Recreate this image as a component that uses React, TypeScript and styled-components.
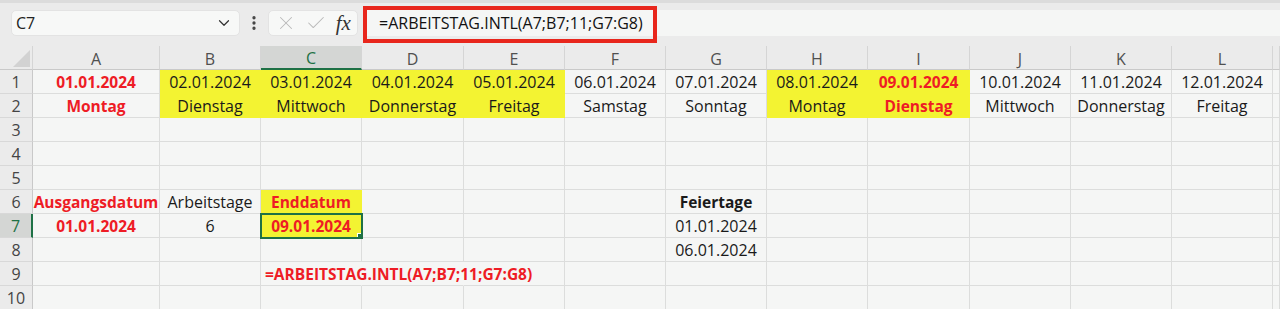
import React from 'react';
import styled, { createGlobalStyle } from 'styled-components';
import { ChevronDown, EllipsisVertical, X, Check } from 'lucide-react';

const GREEN = '#1e7145';
const RED = '#ee1c25';
const YELLOW = '#f3f332';
const GRID = '#dcdddc';

type CellSpec = {
  v: string;
  fill?: boolean;
  red?: boolean;
  bold?: boolean;
  left?: boolean;
  spill?: boolean;
  noRight?: boolean;
};

const columns = ['A', 'B', 'C', 'D', 'E', 'F', 'G', 'H', 'I', 'J', 'K', 'L'];
const widths = [127, 101, 101, 102, 101, 101, 101, 101, 102, 101, 101, 101];

const dates = ['01', '02', '03', '04', '05', '06', '07', '08', '09', '10', '11', '12'];
const days = [
  'Montag', 'Dienstag', 'Mittwoch', 'Donnerstag', 'Freitag', 'Samstag',
  'Sonntag', 'Montag', 'Dienstag', 'Mittwoch', 'Donnerstag', 'Freitag'
];
const yellowCols = ['B', 'C', 'D', 'E', 'H', 'I'];
const redCols = ['A', 'I'];

const cells: Record<string, CellSpec> = {};
columns.forEach((c, i) => {
  const fill = yellowCols.includes(c);
  const red = redCols.includes(c);
  cells[`${c}1`] = { v: `${dates[i]}.01.2024`, fill, red, bold: red };
  cells[`${c}2`] = { v: days[i], fill, red, bold: red };
});
cells.A6 = { v: 'Ausgangsdatum', red: true, bold: true };
cells.B6 = { v: 'Arbeitstage' };
cells.C6 = { v: 'Enddatum', fill: true, red: true, bold: true };
cells.G6 = { v: 'Feiertage', bold: true };
cells.A7 = { v: '01.01.2024', red: true, bold: true };
cells.B7 = { v: '6' };
cells.C7 = { v: '09.01.2024', fill: true, red: true, bold: true };
cells.G7 = { v: '01.01.2024' };
cells.G8 = { v: '06.01.2024' };
cells.C9 = { v: '=ARBEITSTAG.INTL(A7;B7;11;G7:G8)', red: true, bold: true, left: true, spill: true, noRight: true };
cells.D9 = { v: '', noRight: true };

const selected = 'C7';
const rows = [1, 2, 3, 4, 5, 6, 7, 8, 9, 10];

const App = () => {
  return (
    <>
      <GlobalStyle />
      <Toolbar>
        <NameBox>
          <span>C7</span>
          <ChevronDown size={18} strokeWidth={1.6} color="#333" />
        </NameBox>
        <Dots>
          <EllipsisVertical size={18} strokeWidth={2.4} color="#444" />
        </Dots>
        <ButtonGroup>
          <X size={22} strokeWidth={1.1} color="#b9b9b9" />
          <Check size={22} strokeWidth={1.1} color="#b9b9b9" />
          <Fx>fx</Fx>
        </ButtonGroup>
        <FormulaInput>
          =ARBEITSTAG.INTL(A7;B7;11;G7:G8)
          <Highlight />
        </FormulaInput>
      </Toolbar>

      <Sheet $cols={widths}>
        <Corner>
          <svg width="33" height="24" viewBox="0 0 33 24">
            <polygon points="30,4 30,21 13,21" fill="#d2d2d2" />
          </svg>
        </Corner>
        {columns.map((c) => (
          <ColHeader key={c} $active={c === selected[0]}>
            {c}
          </ColHeader>
        ))}
        <ColHeader />

        {rows.map((r) => (
          <React.Fragment key={r}>
            <RowHeader $active={`${r}` === selected.slice(1)}>{r}</RowHeader>
            {columns.map((c) => {
              const id = `${c}${r}`;
              const cell = cells[id];
              return (
                <Cell
                  key={id}
                  $fill={cell?.fill ? YELLOW : undefined}
                  $red={cell?.red}
                  $bold={cell?.bold}
                  $left={cell?.left}
                  $spill={cell?.spill}
                  $noRight={cell?.noRight}
                  $selected={id === selected}
                >
                  {cell?.v}
                </Cell>
              );
            })}
            <Cell />
          </React.Fragment>
        ))}
      </Sheet>
    </>
  );
};

export default App;

const GlobalStyle = createGlobalStyle`
  body {
    margin: 0;
    background: #f5f6f5;
    font-family: 'Open Sans', 'Liberation Sans', sans-serif;
    overflow: hidden;
  }
`;

const Toolbar = styled.div`
  display: flex;
  align-items: flex-start;
  height: 46px;
  box-sizing: border-box;
  padding: 7px 0 0 11px;
  background: #ebebeb;
  border-top: 3px solid #dcdcdc;
`;

const NameBox = styled.div`
  display: flex;
  align-items: center;
  justify-content: space-between;
  width: 229px;
  height: 26px;
  box-sizing: border-box;
  padding: 0 6px 0 4px;
  background: #f7f8f7;
  border: 1px solid #e3e3e3;
  border-radius: 5px;
  font-size: 16px;
  color: #222;
`;

const Dots = styled.div`
  display: flex;
  align-items: center;
  justify-content: center;
  width: 28px;
  height: 26px;
`;

const ButtonGroup = styled.div`
  display: flex;
  align-items: center;
  justify-content: space-around;
  width: 90px;
  height: 26px;
  box-sizing: border-box;
  padding: 0 2px;
  background: #f7f8f7;
  border: 1px solid #e3e3e3;
  border-radius: 5px;
`;

const Fx = styled.span`
  font-family: 'Liberation Serif', 'DejaVu Serif', serif;
  font-style: italic;
  font-size: 21px;
  color: #333;
  line-height: 1;
`;

const FormulaInput = styled.div`
  position: relative;
  flex: 1;
  display: flex;
  align-items: center;
  height: 26px;
  margin-left: 5px;
  padding-left: 16px;
  background: #f5f6f5;
  font-size: 16px;
  color: #111;
  white-space: nowrap;
`;

const Highlight = styled.div`
  position: absolute;
  left: 0;
  top: -4px;
  width: 294px;
  height: 37px;
  box-sizing: border-box;
  border: 4px solid #e8261c;
  pointer-events: none;
`;

const Sheet = styled.div<{ $cols: number[] }>`
  display: grid;
  grid-template-columns: 33px ${(p) => p.$cols.map((w) => `${w}px`).join(' ')} 1fr;
  grid-auto-rows: 24px;
  overflow: hidden;
  font-size: 16px;
`;

const Corner = styled.div`
  background: #ebebeb;
  border-right: 1px solid #d5d5d5;
  border-bottom: 1px solid #c9c9c9;
  box-sizing: border-box;

  svg {
    display: block;
  }
`;

const ColHeader = styled.div<{ $active?: boolean }>`
  display: flex;
  align-items: center;
  justify-content: center;
  box-sizing: border-box;
  padding-top: 2px;
  background: ${(p) => (p.$active ? '#d4d6d4' : '#ebebeb')};
  color: ${(p) => (p.$active ? GREEN : '#505050')};
  border-right: 1px solid #d5d5d5;
  border-bottom: ${(p) => (p.$active ? `2px solid ${GREEN}` : '1px solid #c9c9c9')};
`;

const RowHeader = styled.div<{ $active?: boolean }>`
  display: flex;
  align-items: center;
  justify-content: center;
  box-sizing: border-box;
  background: ${(p) => (p.$active ? '#d4d6d4' : '#ebebeb')};
  color: ${(p) => (p.$active ? GREEN : '#444')};
  border-right: ${(p) => (p.$active ? `2px solid ${GREEN}` : '1px solid #c9c9c9')};
  border-bottom: 1px solid #d8d8d8;
`;

const Cell = styled.div<{
  $fill?: string;
  $red?: boolean;
  $bold?: boolean;
  $left?: boolean;
  $spill?: boolean;
  $noRight?: boolean;
  $selected?: boolean;
}>`
  position: relative;
  display: flex;
  align-items: center;
  justify-content: ${(p) => (p.$left ? 'flex-start' : 'center')};
  box-sizing: border-box;
  padding: 0 ${(p) => (p.$left ? '4px' : '0')};
  white-space: nowrap;
  overflow: ${(p) => (p.$spill ? 'visible' : 'hidden')};
  z-index: ${(p) => (p.$spill || p.$selected ? 2 : 'auto')};
  background: ${(p) => p.$fill || '#f5f6f5'};
  color: ${(p) => (p.$red ? RED : '#1a1a1a')};
  font-weight: ${(p) => (p.$bold ? 700 : 400)};
  font-size: ${(p) => (p.$bold ? '15.5px' : '16px')};
  border-right: 1px solid
    ${(p) => (p.$noRight ? 'transparent' : p.$fill || GRID)};
  border-bottom: 1px solid ${(p) => p.$fill || GRID};
  outline: ${(p) => (p.$selected ? `2px solid ${GREEN}` : 'none')};
  outline-offset: -1px;

  &::after {
    content: '';
    display: ${(p) => (p.$selected ? 'block' : 'none')};
    position: absolute;
    right: -3px;
    bottom: -3px;
    width: 5px;
    height: 5px;
    background: ${GREEN};
    border: 1px solid #fff;
  }
`;
